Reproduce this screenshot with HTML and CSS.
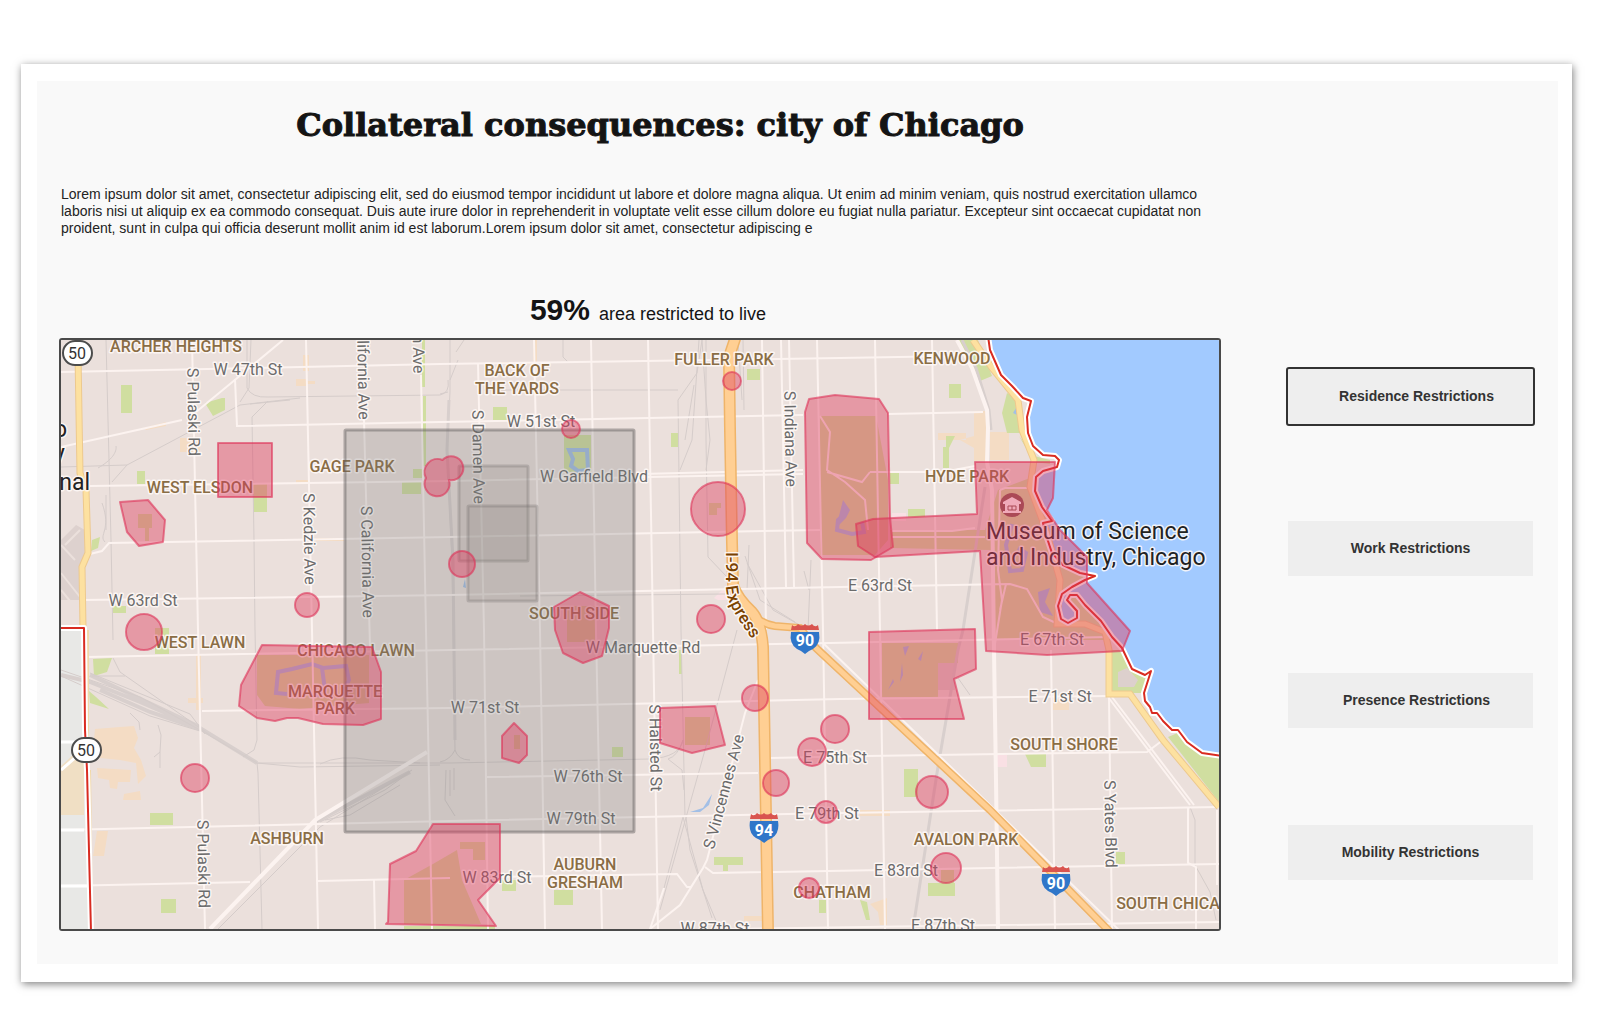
FILE: index.html
```html
<!DOCTYPE html>
<html lang="en">
<head>
<meta charset="utf-8">
<meta name="viewport" content="width=device-width, initial-scale=1">
<title>Collateral consequences: city of Chicago</title>
<link rel="stylesheet" href="styles.css">
</head>
<body>
<main class="card">
<div class="panel">
  <header class="intro">
    <h1 class="title">Collateral consequences: city of Chicago</h1>
    <p class="lead">Lorem ipsum dolor sit amet, consectetur adipiscing elit, sed do eiusmod tempor incididunt ut labore et dolore magna aliqua. Ut enim ad minim veniam, quis nostrud exercitation ullamco laboris nisi ut aliquip ex ea commodo consequat. Duis aute irure dolor in reprehenderit in voluptate velit esse cillum dolore eu fugiat nulla pariatur. Excepteur sint occaecat cupidatat non proident, sunt in culpa qui officia deserunt mollit anim id est laborum.Lorem ipsum dolor sit amet, consectetur adipiscing e</p>
    <p class="stat"><strong class="stat-value">59%</strong> <span class="stat-label">area restricted to live</span></p>
  </header>

  <figure class="map">
  <svg class="map-canvas" viewBox="61 340 1158 589" role="img" aria-label="Map of restricted areas on the South Side of Chicago">
    <defs>
      <g id="interstate">
        <path d="M-13 1Q-10 4-7 0Q-3 3 0 0Q3 3 7 0Q10 4 13 1L14 6H-14Z" fill="#d9544f"/>
        <path d="M-14 8H14Q16 20 8 25Q3 27 0 30Q-3 27-8 25Q-16 20-14 8Z" fill="#2f76c9"/>
      </g>
      <path id="expressway" d="M726 552L726 588C727 604 738 620 760 650"/>
      <path id="shore" d="M988 336L990 350 1001 375 1012 386 1023 398 1031 401 1027 417 1028 433 1033 446 1043 455 1055 456 1059 460 1057 467 1043 471 1036 477 1035 491 1042 507 1052 521 1043 523 1047 538 1052 553 1063 565 1080 573 1095 576 1085 580 1072 587 1062 594 1058 606 1061 619 1068 623 1077 618 1077 611 1067 600 1070 595 1077 595 1085 605 1101 621 1112 637 1122 648 1132 669 1145 675 1151 671 1144 693 1145 701 1150 707 1152 713 1157 713 1163 721 1172 730 1178 730 1187 742 1202 753 1222 756"/>
      <path id="limit" d="M58 628L84 628 85 730 87 770 91 932"/>
    </defs>

    <rect x="61" y="340" width="1158" height="589" fill="#ebe0dc"/>
    <path d="M61 628H84L85 730 91 929H61Z" fill="#e8e8e6"/>
    <path d="M61 766L84 745V815H61Z" fill="#f0dfc4"/>
    <path d="M61 540L76 525L85 530V565L81 600H61Z" fill="#ddd1ce"/>
    <path class="runway" d="M61 545L75 560M61 573L80 597M61 590L70 601M65 545L80 530"/>

    <g class="built">
      <path d="M95 729L120 727 134 726 138 738 134 748 141 760 146 776 138 784 136 763 120 760 100 758 93 750Z"/>
      <path d="M97 768L131 770 130 782 118 782 117 789 110 788 109 780 98 778Z"/>
      <path d="M124 794L140 791 141 800 123 800ZM97 831H108L104 856H93Z"/>
      <path d="M938 433H966V440H938ZM974 411H986V461H974ZM990 432H1009V460H990ZM960 440L974 448V436Z"/>
      <path d="M303 355H309V371H303ZM296 379H306V386H296ZM180 438H200V452H180ZM144 428L166 422V426L146 430Z"/>
      <path d="M305 381H315V384H305ZM296 480H309V484H296ZM316 538H344V541H316ZM500 362H534V364H500ZM533 340H537V364H533Z"/>
      <path d="M196 655H201V710H196ZM188 698H203V703H188ZM870 904L887 898V925H880L878 912ZM1053 699H1069V710H1053ZM744 916H762V921H744ZM860 810H890V816H860Z"/>
    </g>

    <g class="park">
      <path d="M121 385H132V413H121ZM205 403L222 398H225V410L213 416ZM137 471H145V484H137ZM253 484H267V512H253ZM413 469H423V478H413ZM402 481H421V494H402ZM113 606H126V613H113Z"/>
      <path d="M422 340H425V387H422ZM423 396H426V466H423ZM92 540L100 537 98 548 91 551ZM155 628H169V654H155ZM93 659L112 658 107 672 94 676ZM89 691L96 697 109 709 90 703ZM150 813H173V825H150ZM161 899H176V913H161Z"/>
      <path d="M493 407H507V420H493ZM564 435H591V472H564ZM671 433H678V447H671ZM747 369H760V380H747ZM612 747H623V757H612ZM502 880H516V891H502ZM554 890H573V905H554ZM714 857H743V865H728V871H723V865H714ZM819 900H826V913H819ZM679 650H682V674H679Z"/>
      <path d="M949 384H961V398H949ZM908 509H925V517H908ZM890 473H899V484H890ZM943 447H946V436H955L949 448V468H943ZM1002 413L1007 393 1020 401 1022 433H1007ZM958 340H978L992 376 980 381 973 365Z"/>
      <path d="M904 769H918V797H904ZM928 883H955V896H928ZM1025 754H1046V767H1031ZM1116 852H1125V864H1116ZM860 900L867 902 870 920H866ZM1112 650H1124L1132 669 1148 675 1144 693H1112ZM1168 737L1180 732 1202 755H1219V802L1180 752Z"/>
      <path d="M257 655H369V703L300 709 265 706 257 695ZM820 416H876L888 480V540L875 555H820V470ZM138 514H152V528H149V541H145V528H138ZM709 503H721V508H717V515H709ZM567 606H595V642H567ZM514 735H520V749H514ZM685 717H710V745H685Z"/>
      <path d="M882 643H958V663H938V697H882ZM404 880L433 864 457 850 462 880 481 924H404ZM460 842H485V860H473V849H460ZM941 870H954V883H941ZM890 530H985L998 490 1030 478 1045 490 1055 523 1100 576 1100 600 1110 640 992 640V550L890 548ZM404 926H495V929H404ZM1019 436L1034 456 1050 460V464L1034 462Z"/>
    </g>
    <path fill="#ddd0cd" d="M1118 672L1127 668 1138 680 1134 687H1118ZM938 663H955V690H938Z"/>
    <path fill="#f9e0e4" d="M997 755H1007V767H997ZM892 513H906V521H892ZM714 598L724 588 732 600H718Z"/>

    <path fill="#a2caff" d="M988 336L990 350 1001 375 1012 386 1023 398 1031 401 1027 417 1028 433 1033 446 1043 455 1055 456 1059 460 1057 467 1043 471 1036 477 1035 491 1042 507 1052 521 1043 523 1047 538 1052 553 1063 565 1080 573 1095 576 1085 580 1072 587 1062 594 1058 606 1061 619 1068 623 1077 618 1077 611 1067 600 1070 595 1077 595 1085 605 1101 621 1112 637 1122 648 1132 669 1145 675 1151 671 1144 693 1145 701 1152 713 1157 713 1172 730 1178 730 1187 742 1202 753 1222 756V336Z"/>
    <path class="channel" d="M569 450H587L588 470 578 471 571 466 573 459ZM287 694L276 693 278 672 292 669 312 664 323 668 346 666 349 680 344 690M322 668L325 690 316 696M1012 524L1006 545 1010 571 1022 570 1026 553 1018 548M847 512L838 520 837 530 852 534 864 532 862 522"/>
    <g class="pond">
      <path d="M843 500L850 510 846 518 840 524 836 528ZM903 647L909 646 905 656ZM918 659L923 651 921 661ZM900 682L902 663 903 675ZM888 690L893 679 894 682ZM1038 592L1050 588 1045 602 1053 616 1040 612ZM690 812L703 808 712 794 709 805 700 812ZM1013 413L1016 408 1017 415ZM463 587L465 579 466 588Z"/>
    </g>

    <path class="railyard" d="M90 682L140 702 200 728 257 763M90 675L200 727M100 690L150 712 200 729M315 822L410 772M61 675L90 682"/>
    <g class="rail">
      <path d="M106 340L111 540 113 640M61 467L127 465 240 405 300 398M98 468C112 460 117 452 116 446M112 482L127 465M247 340V388Q252 398 268 397L440 395Q450 393 448 380M251 340L249 388 240 402M252 417L254 540 255 630 257 740 254 750 243 757M252 417L268 401M257 763L258 773 262 929M102 503C112 530 98 535 105 542M106 495L106 530M250 404L290 400"/>
      <path d="M450 340V392L447 450 452 560 455 750M448 392L440 394M458 360L450 380M464 340L456 352M484 390L678 390M563 340V357L568 362M455 750Q450 760 440 762M455 750Q458 760 470 760"/>
      <path d="M61 670L140 697 200 730 257 763 450 763 650 759Q680 757 683 740M90 673L190 714 205 734M61 676L150 716 200 731M113 658L120 672 210 735M92 676H125M130 713L139 722 140 730M158 725L161 735 160 752 154 757M160 752V768M257 763L300 767 440 765M320 764Q340 754 370 760L420 763"/>
      <path d="M218 929L320 827 412 770M320 822L385 790 410 772M325 820L350 815 400 785M446 770L445 800 455 816M450 770V796M454 768V790"/>
      <path d="M702 340L697 373 678 400 681 630 685 817M699 340L692 440 680 470M706 340V440L708 557 727 577M702 340L706 400 710 440 706 470M694 385L685 440M743 340L744 410M738 340L742 400M747 563L773 610 803 627M745 556L760 600 795 622M749 545L747 590M811 560L808 630M804 571L809 590M737 630L705 750 660 910M683 817L703 890 717 923M686 817L690 850 712 918M683 740Q678 756 668 759L682 770 684 790M520 596L725 594M683 817L664 888"/>
      <path d="M958 678L970 695M1190 807L1195 820V865L1210 892 1216 920M830 663L846 674"/>
    </g>
    <path class="rail-main" d="M985 487L963 630 958 650 937 773 913 929M962 340L976 368 989 410 991 430M449 400L447 450 453 560 455 740"/>

    <g class="street">
      <path d="M61 372L440 364 840 358 957 356M283 340L230 384 196 412M182 420L61 447M235 379L237 426 440 422 803 415M888 414L983 412M90 486L450 481 803 474M870 472H943L975 466"/>
      <path d="M640 474L803 470M90 554L102 551 109 543 450 537 820 530M83 600L450 595 840 587 1010 584 1027 589 1043 617 1060 625M87 657L450 650 830 643 1107 637M202 711L450 708 840 699 1110 696M487 777L758 773M770 758L867 756 1147 752 1163 740"/>
      <path d="M61 830L450 821 840 813 1219 807M61 886L250 882M318 881L450 878M500 877L677 874 687 887H691M705 867L713 873 1219 864M727 929L1219 922M892 531H952L975 528M892 537H985"/>
      <path d="M192 340L198 630 205 929M306 340L312 630 318 929M364 420L370 647M421 375L426 630 432 929M478 363L484 630 488 929M534 340L540 630 545 929M591 340L596 630 602 929M648 340L653 630 658 929M374 880L375 929"/>
      <path d="M762 340L766 630M781 340L786 587M789 340L794 587M817 340L823 630 828 929M875 340L880 630 885 929M932 340L937 630M1051 650L1055 929M1109 697L1112 929M1188 807V863L1196 867V929M1217 810V885"/>
      <path d="M1108 697L1190 805M1112 697L1194 805M823 643L1120 931M758 680L745 713 707 860 703 868 680 905 650 929M703 868L691 887M664 888L650 929M1000 490L998 570 1002 600 994 650M1000 490L1005 488H1028M1006 584L1000 610M820 416L830 432 827 470 845 482 865 500 868 530M827 472L862 482 870 472"/>
    </g>
    <path class="avenue" d="M957 340L972 368 987 410 988 428 987 462 992 490 994 650 996 780 998 929M210 929L315 820 427 752"/>
    <path class="lightroad" d="M61 742H84M61 770L84 750M61 830H84M61 886H88"/>

    <path class="road-case" d="M78 355L80 473 86 490 88 553 82 567 83 628M973 340L992 368 1018 400 1022 430 1034 460 1030 487 1046 530 1060 580 1057 624 1085 624 1105 632 1109 650V694L1130 694 1163 740 1219 807"/>
    <path class="road" d="M78 355L80 473 86 490 88 553 82 567 83 628M973 340L992 368 1018 400 1022 430 1034 460 1030 487 1046 530 1060 580 1057 624 1085 624 1105 632 1109 650V694L1130 694 1163 740 1219 807"/>
    <path d="M88 630L88 740M90 770L92 929" fill="none" stroke="#f1d8a8" stroke-width="2"/>
    <g class="freeway-case"><path d="M736 336L729 357 730 430 732 543 733 585Q737 598 752 612Q761 622 763 647L768 932"/><path class="freeway-branch" d="M748 610Q760 624 775 626L800 628 816 648 990 810 1110 932"/></g>
    <g class="freeway"><path d="M736 336L729 357 730 430 732 543 733 585Q737 598 752 612Q761 622 763 647L768 932"/><path class="freeway-branch" d="M748 610Q760 624 775 626L800 628 816 648 990 810 1110 932"/></g>
    <g class="boundary"><use href="#shore"/><use href="#limit"/></g>
    <g class="boundary-line"><use href="#shore"/><use href="#limit"/></g>

    <g class="route">
      <rect x="63" y="341" width="29" height="24" rx="12"/><text x="77" y="359">50</text>
      <rect x="72" y="738" width="29" height="24" rx="12"/><text x="86" y="756">50</text>
    </g>
    <g class="shield">
      <use href="#interstate" x="805" y="624"/><text x="805" y="646">90</text>
      <use href="#interstate" x="764" y="813"/><text x="764" y="836">94</text>
      <use href="#interstate" x="1056" y="866"/><text x="1056" y="889">90</text>
    </g>

    <g class="area">
      <text x="176" y="352">ARCHER HEIGHTS</text><text x="200" y="493">WEST ELSDON</text><text x="352" y="472">GAGE PARK</text>
      <text x="200" y="648">WEST LAWN</text><text x="356" y="656">CHICAGO LAWN</text><text x="335" y="697">MARQUETTE</text><text x="335" y="714">PARK</text>
      <text x="287" y="844">ASHBURN</text><text x="517" y="376">BACK OF</text><text x="517" y="394">THE YARDS</text><text x="724" y="365">FULLER PARK</text>
      <text x="574" y="619">SOUTH SIDE</text><text x="585" y="870">AUBURN</text><text x="585" y="888">GRESHAM</text><text x="952" y="364">KENWOOD</text>
      <text x="967" y="482">HYDE PARK</text><text x="1064" y="750">SOUTH SHORE</text><text x="966" y="845">AVALON PARK</text><text x="832" y="898">CHATHAM</text>
      <text x="1168" y="909">SOUTH CHICA</text>
    </g>
    <g class="way">
      <text x="248" y="375">W 47th St</text><text x="143" y="606">W 63rd St</text><text x="541" y="427">W 51st St</text><text x="594" y="482">W Garfield Blvd</text>
      <text x="643" y="653">W Marquette Rd</text><text x="485" y="713">W 71st St</text><text x="588" y="782">W 76th St</text><text x="581" y="824">W 79th St</text>
      <text x="497" y="883">W 83rd St</text><text x="715" y="934">W 87th St</text><text x="880" y="591">E 63rd St</text><text x="1052" y="645">E 67th St</text>
      <text x="1060" y="702">E 71st St</text><text x="835" y="763">E 75th St</text><text x="827" y="819">E 79th St</text><text x="906" y="876">E 83rd St</text><text x="943" y="931">E 87th St</text>
      <text transform="translate(188 412) rotate(89)">S Pulaski Rd</text>
      <text transform="translate(358 380) rotate(89)">lifornia Ave</text>
      <text transform="translate(413 354) rotate(89)">n Ave</text>
      <text transform="translate(304 539) rotate(89)">S Kedzie Ave</text>
      <text transform="translate(362 562) rotate(89)">S California Ave</text>
      <text transform="translate(473 457) rotate(89)">S Damen Ave</text>
      <text transform="translate(785 439) rotate(89)">S Indiana Ave</text>
      <text transform="translate(198 864) rotate(89)">S Pulaski Rd</text>
      <text transform="translate(650 748) rotate(89)">S Halsted St</text>
      <text transform="translate(729 793) rotate(-75)">S Vincennes Ave</text>
      <text transform="translate(1105 824) rotate(89)">S Yates Blvd</text>
    </g>
    <text class="express"><textPath href="#expressway">I-94 Express</textPath></text>
    <g class="place place-end"><text x="67" y="437">o</text><text x="65" y="461">y</text><text x="90" y="490">nal</text></g>
    <g class="place"><text x="986" y="539">Museum of Science</text><text x="986" y="565">and Industry, Chicago</text></g>
    <g>
      <circle cx="1012" cy="505" r="12" fill="#84524f"/>
      <path d="M1003 502L1012 497 1021 502V504H1003ZM1005 504H1019V511H1005ZM1003 511H1021V513H1003Z" fill="#fff"/>
      <path d="M1008 506H1016V510H1008ZM1012 506V510" fill="none" stroke="#84524f"/>
    </g>

    <g class="zone-muted">
      <rect x="345" y="430" width="289" height="402" rx="1"/>
      <rect x="459" y="466" width="69" height="95" rx="1"/>
      <rect x="468" y="506" width="69" height="95" rx="1"/>
    </g>
    <g class="zone">
      <rect x="218" y="443" width="54" height="54"/>
      <path d="M120 502L148 500 165 520 163 542 139 546 127 532Z"/>
      <path d="M426 478A13 13 0 0 1 442.500 460A12 12 0 1 1 449 480A12.500 12.500 0 1 1 426 478Z"/>
      <path d="M580 592L609 606V628L602 656 583 663 563 653 555 630 554 607Z"/>
      <path d="M262 645L372 647 381 672V719L363 725 323 724 298 718H287L275 721 257 718 239 706 241 685Z"/>
      <path d="M433 824H500V878L478 900 496 926 386 924 388 922 390 864 416 851Z"/>
      <path d="M514 723L527 736V755L519 763 502 758V736Z"/>
      <path d="M660 708L715 706 725 745 692 753 660 743Z"/>
      <path d="M869 632L975 629 976 669 954 679 964 719H869Z"/>
      <path d="M809 399L835 395 879 399 888 413 890 517 893 547 871 560 822 559 807 543 805 412Z"/>
      <path d="M856 524L873 519 977 514 975 462H1055L1053 498 1047 510 1060 530 1087 557V583L1130 631 1122 651 1047 655 986 651 980 551 875 557 858 546Z"/>
      <circle cx="307" cy="605" r="12"/><circle cx="144" cy="632" r="18"/><circle cx="571" cy="429" r="9"/><circle cx="732" cy="381" r="9"/>
      <circle cx="718" cy="509" r="27"/><circle cx="462" cy="564" r="13"/><circle cx="711" cy="619" r="14"/><circle cx="195" cy="778" r="14"/>
      <circle cx="755" cy="698" r="13"/><circle cx="776" cy="783" r="13"/><circle cx="812" cy="752" r="14"/><circle cx="835" cy="729" r="14"/>
      <circle cx="826" cy="812" r="11"/><circle cx="809" cy="888" r="10"/><circle cx="932" cy="792" r="16"/><circle cx="946" cy="868" r="15"/>
    </g>
  </svg>
  </figure>

  <nav class="options" aria-label="Restriction type">
    <button type="button" class="option option-shifted" aria-pressed="true">Residence Restrictions</button>
    <button type="button" class="option" aria-pressed="false">Work Restrictions</button>
    <button type="button" class="option option-shifted" aria-pressed="false">Presence Restrictions</button>
    <button type="button" class="option" aria-pressed="false">Mobility Restrictions</button>
  </nav>
</div>
</main>
</body>
</html>
```
FILE: styles.css
```css
* { box-sizing: border-box; }

body {
  margin: 0;
  background: #fff;
  color: #141414;
  font-family: "Liberation Sans", Arial, sans-serif;
}

.card {
  margin: 64px 28px 47px 21px;
  padding: 17px 14px 18px 16px;
  background: #fff;
  box-shadow: 1px 2px 8px rgba(0, 0, 0, 0.5);
}

.panel {
  display: grid;
  grid-template-columns: minmax(0, 1fr) 245px;
  column-gap: 67px;
  align-items: start;
  padding: 24px 25px 33px 22px;
  background: #f9f9f9;
}

.intro { grid-column: 1; }

.title {
  margin: 0;
  padding-left: 40px;
  font: 700 32px/40px "DejaVu Serif", serif;
  text-align: center;
  -webkit-text-stroke: 1px #141414;
}

.lead {
  margin: 41px 16px 0 2px;
  color: #222;
  font-size: 14px;
  line-height: 17px;
}

.stat {
  display: flex;
  justify-content: center;
  align-items: baseline;
  gap: 9px;
  margin: 55px 0 6px;
  padding-left: 16px;
  line-height: 36px;
}

.stat-value { font-size: 30px; }
.stat-label { font-size: 18px; }

.map {
  grid-column: 1;
  margin: 0;
  border: 2px solid #4a4a4a;
  border-radius: 3px;
  overflow: hidden;
}

.map-canvas {
  display: block;
  width: 100%;
  height: auto;
  font-family: Roboto, sans-serif;
}

.options {
  grid-column: 2;
  display: flex;
  flex-direction: column;
  gap: 97px;
  padding-top: 31px;
}

.option {
  height: 55px;
  padding: 0;
  border: 0;
  background: #eee;
  color: #333;
  font: 700 14px/17px "Liberation Sans", Arial, sans-serif;
}

.option-shifted { padding-left: 12px; }

.option[aria-pressed="true"] {
  border-radius: 1px;
  outline: 2px solid #333;
}

/* Base map */
.park { fill: #d0dea0; }
.built { fill: #f4dcc4; }
.pond { fill: #a2bfe6; }
.channel { fill: none; stroke: #a2bfe6; stroke-width: 4; }
.runway { fill: none; stroke: #ebe0dc; stroke-width: 2; }
.rail { fill: none; stroke: #d5ccca; stroke-width: 1; }
.rail-main { fill: none; stroke: #d8cfcd; stroke-width: 3; }
.railyard { fill: none; stroke: #d8cfcd; stroke-width: 4; }
.street { fill: none; stroke: #fcf3f0; stroke-width: 2; }
.avenue { fill: none; stroke: #fcf3f0; stroke-width: 4; }
.lightroad { fill: none; stroke: #fff; stroke-width: 3; }
.road-case { fill: none; stroke: #edc98e; stroke-width: 7; }
.road { fill: none; stroke: #fde1a0; stroke-width: 5; }
.freeway-case { fill: none; stroke: #efb469; stroke-width: 12; }
.freeway { fill: none; stroke: #ffcf93; stroke-width: 9; }
.freeway-case .freeway-branch { stroke-width: 8; }
.freeway .freeway-branch { stroke-width: 5; }
.boundary { fill: none; stroke: #fff; stroke-width: 6; stroke-linejoin: round; }
.boundary-line { fill: none; stroke: #d92b21; stroke-width: 2; stroke-linejoin: round; }

/* Map labels */
.area, .way, .express, .place {
  paint-order: stroke;
  stroke: rgba(255, 250, 248, 0.85);
  stroke-width: 3px;
  stroke-linejoin: round;
  font-size: 16px;
}

.area { fill: #8a6d45; font-weight: 500; text-anchor: middle; }
.way { fill: #6b6b6b; text-anchor: middle; }
.express { fill: #7a4200; font-size: 17px; font-weight: 500; }
.place { fill: #222; font-size: 23px; }
.place-end { text-anchor: end; }

.route rect { fill: #fff; stroke: #4c4c4c; stroke-width: 2; }
.route text { fill: #333; font-size: 16px; text-anchor: middle; }
.shield text { fill: #fff; font-size: 16px; font-weight: 700; text-anchor: middle; }

/* Overlays */
.zone { fill: rgba(220, 61, 96, 0.44); stroke: rgba(222, 48, 86, 0.6); stroke-width: 2; stroke-linejoin: round; }
.zone-muted { fill: rgba(120, 120, 120, 0.26); stroke: rgba(95, 92, 92, 0.45); stroke-width: 3; }
.zone-muted rect + rect { fill: rgba(135, 130, 120, 0.18); stroke: rgba(95, 92, 92, 0.25); }
```
